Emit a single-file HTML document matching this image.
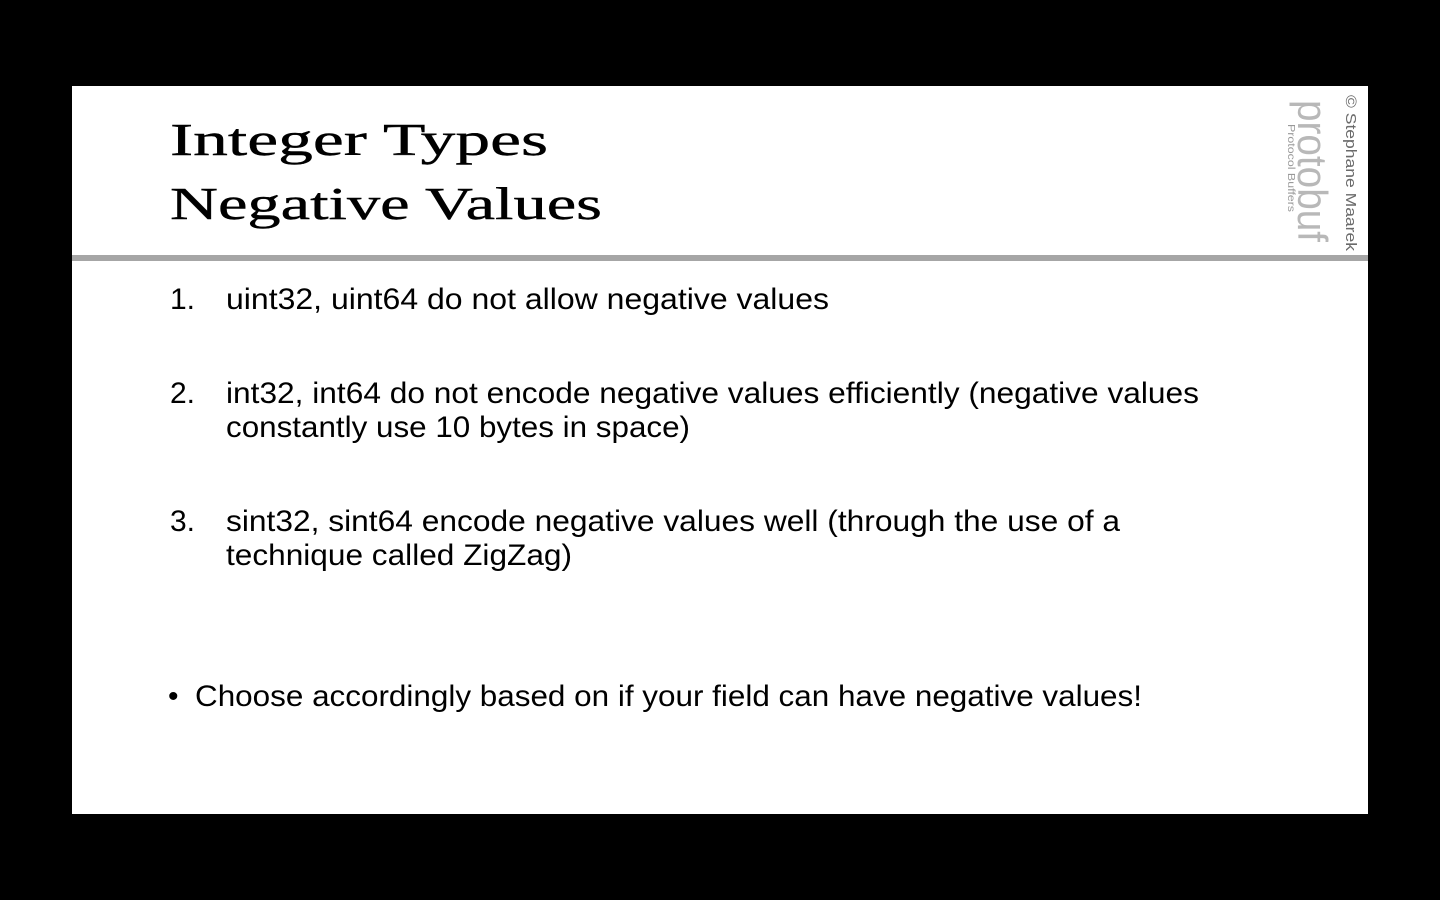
<!DOCTYPE html>
<html><head><meta charset="utf-8"><style>
html,body{margin:0;padding:0;background:#000;width:1440px;height:900px;overflow:hidden}
svg{display:block}
</style></head><body>
<svg width="1440" height="900" xmlns="http://www.w3.org/2000/svg">
<rect x="0" y="0" width="1440" height="900" fill="#000"/>
<rect x="72" y="86" width="1296" height="728" fill="#fff"/>
<rect x="72" y="255" width="1296" height="6" fill="#a6a6a6"/>
<g font-family="Liberation Serif, serif" fill="#000" stroke="#000" stroke-width="0.4" font-size="46">
<text x="170" y="155" textLength="378" lengthAdjust="spacingAndGlyphs">Integer Types</text>
<text x="170" y="219" textLength="432" lengthAdjust="spacingAndGlyphs">Negative Values</text>
</g>
<g font-family="Liberation Sans, sans-serif" fill="#000" font-size="30">
<text x="170" y="309">1.</text>
<text x="226" y="309" textLength="603" lengthAdjust="spacingAndGlyphs">uint32, uint64 do not allow negative values</text>
<text x="170" y="403">2.</text>
<text x="226" y="403" textLength="973" lengthAdjust="spacingAndGlyphs">int32, int64 do not encode negative values efficiently (negative values</text>
<text x="226" y="437" textLength="464" lengthAdjust="spacingAndGlyphs">constantly use 10 bytes in space)</text>
<text x="170" y="531">3.</text>
<text x="226" y="531" textLength="894" lengthAdjust="spacingAndGlyphs">sint32, sint64 encode negative values well (through the use of a</text>
<text x="226" y="565" textLength="346" lengthAdjust="spacingAndGlyphs">technique called ZigZag)</text>
<text x="168" y="706">•</text>
<text x="195" y="706" textLength="947" lengthAdjust="spacingAndGlyphs">Choose accordingly based on if your field can have negative values!</text>
</g>
<g font-family="Liberation Sans, sans-serif">
<text transform="translate(1346,95) rotate(90)" font-size="15" fill="#6a6a6a" textLength="156" lengthAdjust="spacingAndGlyphs">© Stephane Maarek</text>
<text transform="translate(1298,100) rotate(90)" font-size="42" fill="#b8b8b8" textLength="142" lengthAdjust="spacingAndGlyphs">protobuf</text>
<text transform="translate(1288,124) rotate(90)" font-size="10" fill="#999" textLength="88" lengthAdjust="spacingAndGlyphs">Protocol Buffers</text>
</g>
</svg>
</body></html>
